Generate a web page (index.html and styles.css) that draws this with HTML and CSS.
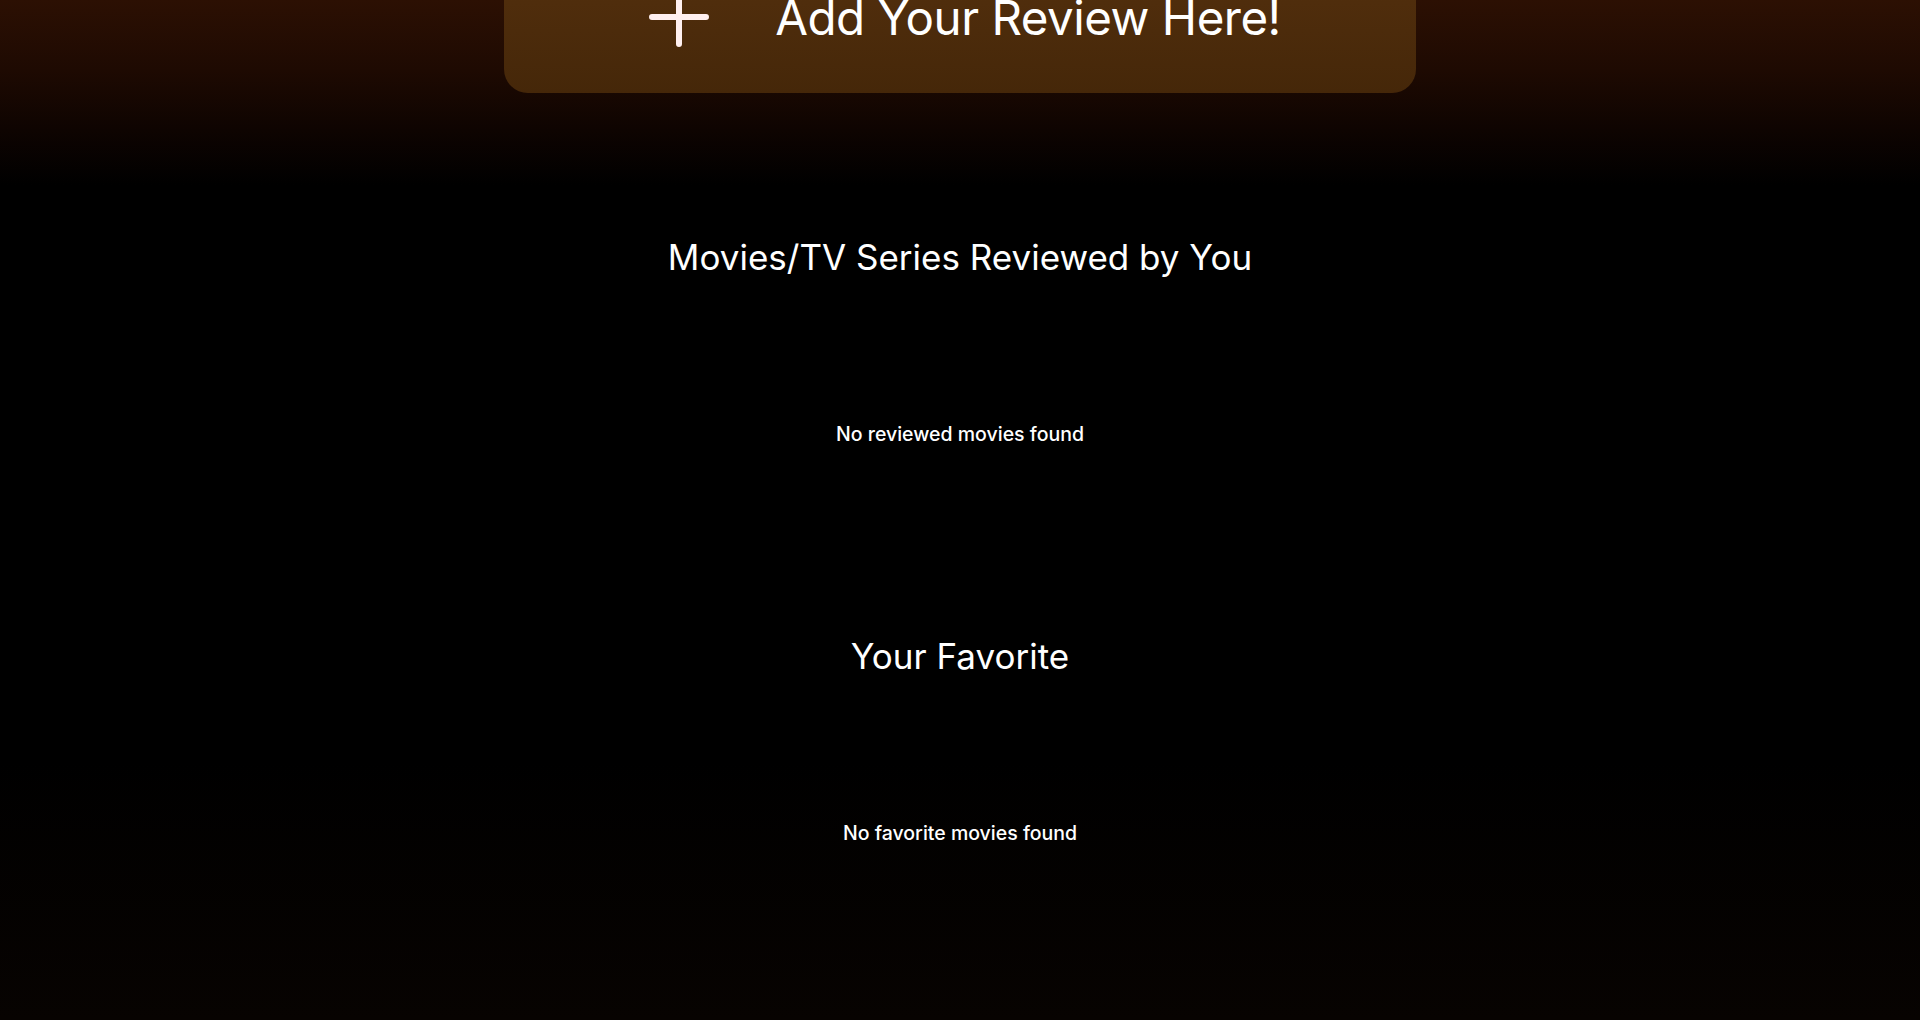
FILE: index.html
```html
<!DOCTYPE html>
<html lang="en">
<head>
<meta charset="utf-8">
<title>Your Reviews</title>
<link rel="stylesheet" href="styles.css">
</head>
<body>
<main class="page">
  <div class="add-wrap">
    <button class="add-review" type="button">
      <svg class="plus" viewBox="0 0 60 60" width="60" height="60" aria-hidden="true">
        <path d="M30 3 V57 M3 30 H57" stroke="#fff0f0" stroke-width="6" stroke-linecap="round" fill="none"/>
      </svg>
      <span class="add-label">Add Your Review Here!</span>
    </button>
  </div>

  <section class="section reviewed">
    <h2 class="section-title">Movies/TV Series Reviewed by You</h2>
    <p class="empty">No reviewed movies found</p>
  </section>

  <section class="section favorite">
    <h2 class="section-title">Your Favorite</h2>
    <p class="empty">No favorite movies found</p>
  </section>
</main>
</body>
</html>
```

FILE: styles.css
```css
html, body {
  margin: 0;
  padding: 0;
  height: 1020px;
  overflow: hidden;
}
body {
  background: linear-gradient(to bottom, #2c1003 0px, #1e0a02 70px, #0e0401 130px, #000 185px, #000 760px, #070301 1020px);
  font-family: "Inter", "Open Sans", sans-serif;
  color: #fff;
}
.page {
  display: flex;
  flex-direction: column;
  align-items: center;
}
.add-wrap {
  margin-top: -59px;
}
.add-review {
  width: 912px;
  height: 152px;
  border: none;
  border-radius: 24px;
  background: linear-gradient(to bottom, #56310e, #452709);
  color: #fff;
  display: flex;
  align-items: center;
  justify-content: center;
  gap: 66px;
  padding: 0 0 0 10px;
  font-family: inherit;
  cursor: pointer;
}
.plus {
  display: block;
  flex: none;
}
.add-label {
  font-size: 47.5px;
  font-weight: 400;
  letter-spacing: -0.5px;
}
.section {
  display: flex;
  flex-direction: column;
  align-items: center;
}
.section-title {
  margin: 0;
  font-weight: 400;
  font-size: 35px;
  line-height: 44px;
}
.empty {
  margin: 0;
  font-size: 19.5px;
  font-weight: 500;
  line-height: 24px;
}
.reviewed {
  margin-top: 142px;
}
.reviewed .empty {
  margin-top: 143px;
}
.favorite {
  margin-top: 188px;
}
.favorite .empty {
  margin-top: 143px;
}
```
